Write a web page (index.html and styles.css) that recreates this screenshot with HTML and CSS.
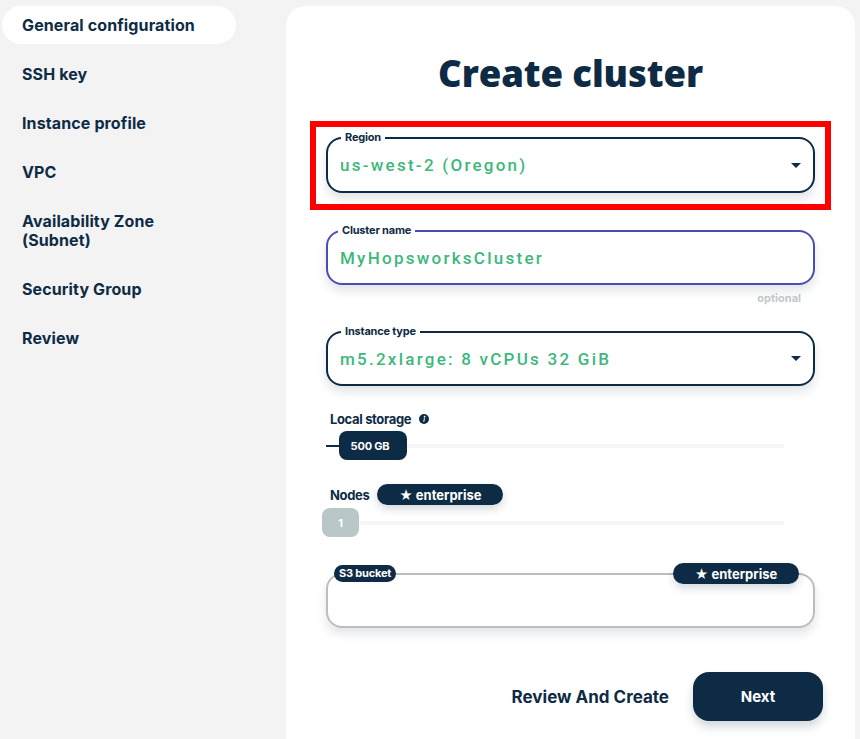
FILE: index.html
```html
<!DOCTYPE html>
<html lang="en">
<head>
<meta charset="utf-8">
<title>Create cluster</title>
<link rel="stylesheet" href="styles.css">
</head>
<body>
<div class="layout">
  <nav class="sidebar">
    <a class="nav-item active">General configuration</a>
    <a class="nav-item">SSH key</a>
    <a class="nav-item">Instance profile</a>
    <a class="nav-item">VPC</a>
    <a class="nav-item">Availability Zone<br>(Subnet)</a>
    <a class="nav-item">Security Group</a>
    <a class="nav-item">Review</a>
  </nav>
  <main class="panel">
    <h1 class="title">Create cluster</h1>

    <div class="highlight">
      <div class="field">
        <span class="field-label">Region</span>
        <span class="field-value">us-west-2 (Oregon)</span>
        <span class="caret"></span>
      </div>
    </div>

    <div class="field field-focus field-cluster">
      <span class="field-label label-tight">Cluster name</span>
      <span class="field-value">MyHopsworksCluster</span>
    </div>
    <div class="hint">optional</div>

    <div class="field field-instance">
      <span class="field-label">Instance type</span>
      <span class="field-value">m5.2xlarge: 8 vCPUs 32 GiB</span>
      <span class="caret"></span>
    </div>

    <div class="row-label storage-label">
      <span>Local storage</span>
      <svg class="info" width="10" height="10" viewBox="0 0 10 10"><circle cx="5" cy="5" r="5" fill="#0e2b45"/><circle cx="5.6" cy="2.7" r="0.9" fill="#fff"/><path d="M4.9 4.2h1.1l-0.7 3.6h-1.1z" fill="#fff"/></svg>
    </div>
    <div class="slider">
      <span class="slider-fill"></span>
      <span class="thumb">500 GB</span>
      <span class="slider-track"></span>
    </div>

    <div class="row-label nodes-label">
      <span>Nodes</span>
      <span class="badge">★ enterprise</span>
    </div>
    <div class="slider slider-disabled">
      <span class="thumb thumb-gray">1</span>
      <span class="slider-track"></span>
    </div>

    <div class="field field-disabled">
      <span class="pill-label">S3 bucket</span>
      <span class="badge badge-right">★ enterprise</span>
    </div>

    <div class="actions">
      <span class="link-btn">Review And Create</span>
      <button class="next-btn">Next</button>
    </div>
  </main>
  <div class="gutter"></div>
</div>
</body>
</html>
```

FILE: styles.css
```css
* { box-sizing: border-box; }

html, body {
  margin: 0;
  padding: 0;
  height: 100%;
}

body {
  background: #f3f3f3;
  font-family: "Inter", "Roboto", sans-serif;
  color: #0e2b45;
  overflow: hidden;
}

.layout {
  display: flex;
  height: 739px;
}

.sidebar {
  flex: 0 0 286px;
  display: flex;
  flex-direction: column;
  gap: 11px;
  padding: 6px 0 0 2px;
}

.nav-item {
  display: block;
  width: 234px;
  padding: 9.5px 0 9.5px 20px;
  font-size: 16px;
  line-height: 19px;
  font-weight: 700;
  color: #0e2b45;
  border-radius: 19px;
  letter-spacing: 0.12px;
}

.nav-item.active {
  background: #ffffff;
}

.panel {
  flex: 0 0 569px;
  margin-top: 6px;
  background: #ffffff;
  border-radius: 20px 20px 0 0;
  padding: 0 40px;
  display: flex;
  flex-direction: column;
}

.gutter {
  flex: 1;
}

.title {
  margin: 45px 0 0;
  text-align: center;
  font-family: "Open Sans", sans-serif;
  font-weight: 800;
  font-size: 36.5px;
  line-height: 44px;
  letter-spacing: -0.1px;
  color: #0e2b45;
}

.highlight {
  margin: 26px -16px 0;
  border: 6px solid #ff0000;
  padding: 10px 10px 11px;
}

.field {
  position: relative;
  height: 56px;
  border: 2px solid #0e2b45;
  border-radius: 16px;
  display: flex;
  align-items: center;
  padding: 0 12px;
  box-shadow: 0 6px 10px rgba(14, 43, 69, 0.12);
}

.field-focus {
  border-color: #4c4db4;
}

.field-cluster {
  margin-top: 20px;
  height: 55px;
}

.field-instance {
  margin-top: 27px;
  height: 55px;
}

.field-disabled {
  margin-top: 36px;
  height: 55px;
  border-color: #bdbdbd;
}

.field-label {
  position: absolute;
  top: -9px;
  left: 13px;
  padding: 0 4px;
  background: #ffffff;
  font-size: 11px;
  line-height: 14px;
  font-weight: 700;
  color: #0e2b45;
  letter-spacing: -0.2px;
}

.label-tight {
  left: 10px;
}

.field-value {
  font-family: "Roboto", sans-serif;
  font-weight: 500;
  font-size: 17px;
  letter-spacing: 2.25px;
  color: #3db87c;
}

.caret {
  margin-left: auto;
  margin-right: 0;
  width: 0;
  height: 0;
  border-left: 5px solid transparent;
  border-right: 5px solid transparent;
  border-top: 5px solid #0e2b45;
}

.hint {
  margin-top: 7px;
  padding-right: 14px;
  text-align: right;
  font-size: 11px;
  line-height: 12px;
  font-weight: 700;
  color: #c2c8cb;
}

.row-label {
  display: flex;
  align-items: center;
  padding-left: 4px;
  font-size: 13px;
  line-height: 16px;
  font-weight: 700;
  color: #0e2b45;
  letter-spacing: -0.35px;
}

.storage-label {
  margin-top: 25px;
}

.info {
  margin-left: 8px;
}

.nodes-label {
  margin-top: 24px;
  gap: 8px;
}

.slider {
  display: flex;
  align-items: center;
  width: 458px;
  height: 29px;
  margin-top: 4px;
}

.slider-fill {
  width: 13px;
  height: 2px;
  background: #0e2b45;
}

.slider-track {
  flex: 1;
  height: 4px;
  background: #f6f6f6;
}

.thumb {
  display: flex;
  align-items: center;
  justify-content: center;
  width: 68px;
  height: 29px;
  border-radius: 8px;
  background: #0e2b45;
  color: #ffffff;
  font-size: 11px;
  font-weight: 700;
  padding-right: 6px;
  letter-spacing: -0.2px;
}

.slider-disabled {
  margin-top: 3px;
  margin-left: -4px;
  width: 462px;
}

.thumb-gray {
  width: 37px;
  background: #b9c7c9;
  padding-right: 0;
}

.badge {
  display: inline-flex;
  align-items: center;
  justify-content: center;
  width: 126px;
  height: 21px;
  border-radius: 11px;
  background: #0e2b45;
  color: #ffffff;
  font-size: 13px;
  font-weight: 700;
  letter-spacing: 0;
  box-shadow: 0 4px 8px rgba(14, 43, 69, 0.18);
}

.badge-right {
  position: absolute;
  top: -12px;
  right: 14px;
}

.pill-label {
  position: absolute;
  top: -10px;
  left: 6px;
  height: 17px;
  padding: 0 5px;
  border-radius: 9px;
  background: #0e2b45;
  color: #ffffff;
  font-size: 11px;
  line-height: 17px;
  font-weight: 700;
  letter-spacing: -0.2px;
}

.actions {
  margin-top: 44px;
  margin-right: -8px;
  display: flex;
  justify-content: flex-end;
  align-items: center;
  gap: 24px;
}

.link-btn {
  font-size: 17px;
  font-weight: 700;
  color: #0e2b45;
}

.next-btn {
  width: 130px;
  height: 49px;
  border: none;
  border-radius: 16px;
  background: #0e2b45;
  color: #ffffff;
  font-family: "Inter", sans-serif;
  font-size: 15px;
  font-weight: 700;
  box-shadow: 0 6px 10px rgba(14, 43, 69, 0.18);
}
```
